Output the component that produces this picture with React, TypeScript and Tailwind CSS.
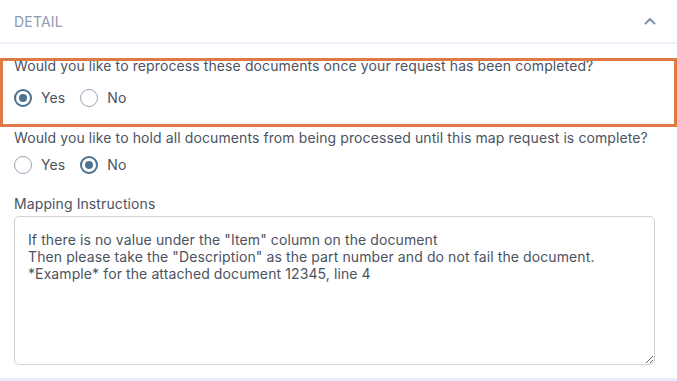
import { useState } from "react";

function Radio({ checked, label, onClick }: { checked: boolean; label: string; onClick: () => void }) {
  return (
    <button type="button" onClick={onClick} className="flex items-center gap-[9px]">
      <span
        className={
          checked
            ? "flex h-[18px] w-[18px] items-center justify-center rounded-full border-2 border-[#4d6f8b]"
            : "flex h-[18px] w-[18px] items-center justify-center rounded-full border-[1.5px] border-[#9aa6b3]"
        }
      >
        {checked && <span className="h-[8px] w-[8px] rounded-full bg-[#4d7391]" />}
      </span>
      <span className="text-[14px] text-[#4b5361]">{label}</span>
    </button>
  );
}

export default function App() {
  const [reprocess, setReprocess] = useState("yes");
  const [hold, setHold] = useState("no");

  return (
    <div
      className="relative h-[381px] w-[677px] overflow-hidden bg-white text-[#4b5361]"
      style={{ fontFamily: "Inter, 'Noto Sans', sans-serif" }}
    >
      {/* header */}
      <div className="flex h-[44px] items-center justify-between border-b-2 border-[#eef0f9] pl-[14px] pr-[21px]">
        <span className="text-[14px] tracking-[0.2px] text-[#8d9cb0]">DETAIL</span>
        <svg width="12" height="8" viewBox="0 0 12 8" fill="none">
          <path d="M1.5 6.5 6 2l4.5 4.5" stroke="#8093ad" strokeWidth="2" strokeLinecap="round" strokeLinejoin="round" />
        </svg>
      </div>

      <div className="flex flex-col px-[14px] pt-[12px] tracking-[0.1px]">
        <p className="text-[14px] leading-[20px]">
          Would you like to reprocess these documents once your request has been completed?
        </p>
        <div className="mt-[11px] flex items-center gap-[15px]">
          <Radio checked={reprocess === "yes"} label="Yes" onClick={() => setReprocess("yes")} />
          <Radio checked={reprocess === "no"} label="No" onClick={() => setReprocess("no")} />
        </div>

        <p className="mt-[20px] text-[14px] leading-[20px]">
          Would you like to hold all documents from being processed until this map request is complete?
        </p>
        <div className="mt-[6px] flex items-center gap-[15px]">
          <Radio checked={hold === "yes"} label="Yes" onClick={() => setHold("yes")} />
          <Radio checked={hold === "no"} label="No" onClick={() => setHold("no")} />
        </div>

        <label className="mt-[19px] text-[14px] leading-[20px]">Mapping Instructions</label>
        <textarea
          className="mt-[2px] h-[149px] w-[641px] resize-y rounded-[5px] border border-[#d3d3d3] px-[13px] py-[14px] text-[14px] leading-[17px] tracking-[0.1px] text-[#4b5361] outline-none"
          defaultValue={
            'If there is no value under the "Item" column on the document\nThen please take the "Description" as the part number and do not fail the document.\n*Example* for the attached document 12345, line 4'
          }
        />
      </div>

      {/* bottom edge */}
      <div className="absolute bottom-0 left-0 h-[3px] w-full bg-[#e5ebfa]" />

      {/* highlight annotation */}
      <div className="pointer-events-none absolute left-0 top-[58px] h-[69px] w-[677px] border-[3px] border-[#e07a45]" />
    </div>
  );
}
